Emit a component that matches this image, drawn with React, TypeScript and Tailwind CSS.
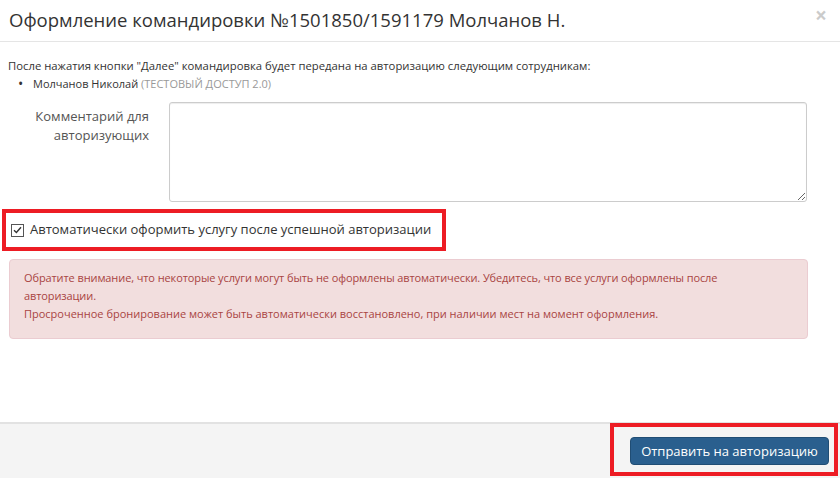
import React from 'react';

const CheckMark: React.FC = () => (
  <span className="flex h-[13px] w-[13px] shrink-0 items-center justify-center border border-[#555] bg-white">
    <svg width="9" height="8" viewBox="0 0 9 8" fill="none">
      <path d="M1 4.2 L3.4 6.5 L8 1.2" stroke="#333" strokeWidth="1.4" />
    </svg>
  </span>
);

const App: React.FC = () => {
  return (
    <div className="flex h-[478px] w-[840px] flex-col bg-white font-['Open_Sans',sans-serif] text-[#333]">
      <div className="flex h-[42px] shrink-0 items-start justify-between border-b border-[#e5e5e5] pl-[9px] pr-[13px]">
        <h4 className="pt-[7px] text-[18.5px] leading-[25px] text-[#333]">
          Оформление командировки №1501850/1591179 Молчанов Н.
        </h4>
        <button className="pt-[1px] text-[21px] font-bold leading-[28px] text-black opacity-20">×</button>
      </div>

      <div className="flex-1 px-[8px] pt-[15px]">
        <p className="text-[11.3px] leading-[18px]">
          После нажатия кнопки "Далее" командировка будет передана на авторизацию следующим сотрудникам:
        </p>
        <div className="flex items-center pl-[10px] text-[11px] leading-[18px]">
          <span className="w-[15px] text-[14px] leading-[18px] text-[#333]">•</span>
          <span>
            Молчанов Николай <span className="text-[#999]">(ТЕСТОВЫЙ ДОСТУП 2.0)</span>
          </span>
        </div>

        <div className="mt-[9px] flex">
          <label className="w-[141px] pt-[5px] text-right text-[13px] leading-[19px] text-[#555]">
            Комментарий для
            <br />
            авторизующих
          </label>
          <textarea className="ml-[20px] h-[100px] w-[638px] rounded-[3px] border border-[#ccc] shadow-[inset_0_1px_1px_rgba(0,0,0,0.075)] outline-none" />
        </div>

        <div className="-ml-[6px] mt-[7px] flex h-[42px] w-[444px] items-center border-4 border-[#ed1c24]">
          <div className="ml-[5px] flex items-center gap-[6px] text-[13px] text-[#333]">
            <CheckMark />
            <span>Автоматически оформить услугу после успешной авторизации</span>
          </div>
        </div>

        <div className="ml-[1px] mt-[8px] w-[799px] rounded-[4px] border border-[#ebccd1] bg-[#f2dede] pb-[15px] pl-[14px] pt-[9px] text-[11px] leading-[18px] text-[#a94442]">
          <p className="tracking-[-0.1px]">
            Обратите внимание, что некоторые услуги могут быть не оформлены автоматически. Убедитесь, что все услуги оформлены после
            <br />
            авторизации.
          </p>
          <p>Просроченное бронирование может быть автоматически восстановлено, при наличии мест на момент оформления.</p>
        </div>
      </div>

      <div className="flex h-[56px] shrink-0 items-end justify-end border-t-2 border-[#e2e2e2] bg-[#f4f4f4] pb-[2px] pr-[2px]">
        <div className="flex h-[53px] w-[228px] items-start justify-end border-4 border-[#ed1c24] pr-[5px] pt-[10px]">
          <button className="h-[28px] w-[199px] rounded-[4px] border border-[#204d74] bg-[#2a5f8e] text-[13px] leading-[26px] text-white">
            Отправить на авторизацию
          </button>
        </div>
      </div>
    </div>
  );
};

export default App;
